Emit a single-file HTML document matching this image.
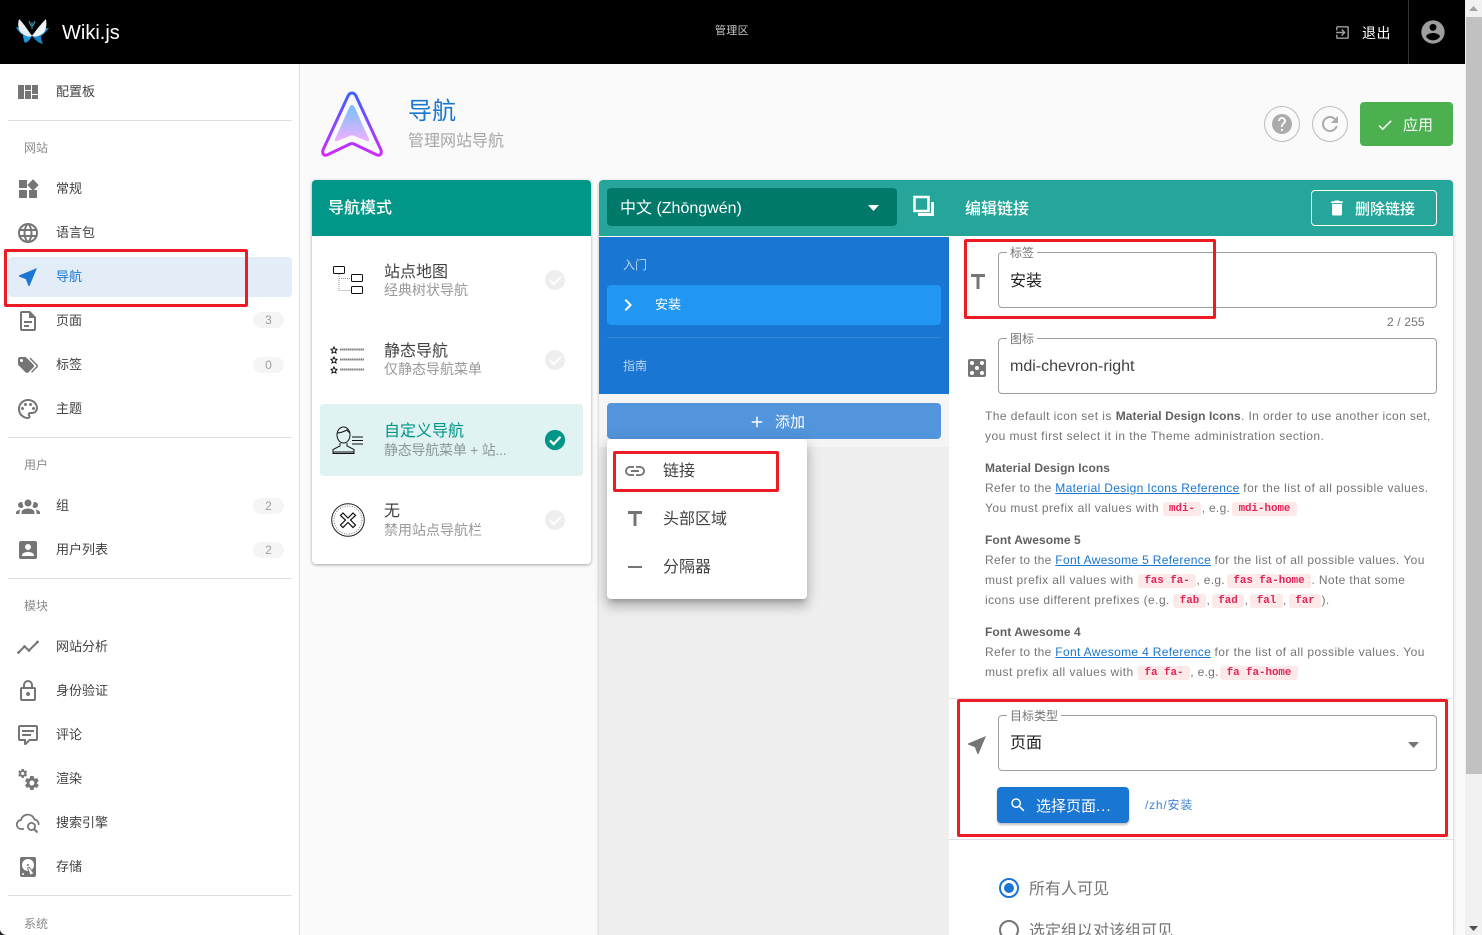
<!DOCTYPE html>
<html lang="zh"><head><meta charset="utf-8"><title>Wiki.js</title>
<style>
html,body{margin:0;padding:0;width:1482px;height:935px;overflow:hidden;background:#fafafa}
body{position:relative;font-family:"Liberation Sans","Noto Sans CJK SC",sans-serif;color:#333}
div,svg{position:absolute}
.t{position:absolute;white-space:pre;line-height:20px;height:20px}
.n{left:56px;font-size:13px;color:#424242}
.s{left:24px;font-size:12px;color:#8a8a8a}
.d{left:8px;width:284px;height:1px;background:#e0e0e0}
.i{left:16px;width:24px;height:24px;fill:#757575}
.b{left:253px;width:31px;height:16px;border-radius:8px;background:#f5f5f5;color:#9e9e9e;font-size:12px;line-height:16px;text-align:center}
.m1{left:384px;font-size:16px;color:#424242}
.m2{left:384px;font-size:13px;color:#8f8f8f}
.c{left:544px;width:22px;height:22px;fill:#eee}
.h{font-size:12px;color:#757575;letter-spacing:.44px;left:985px}
.h b{color:#616161;letter-spacing:.08px}
.h a{color:#1976d2;text-decoration:underline;letter-spacing:.33px}
.k{position:absolute;font-family:"Liberation Mono",monospace;font-weight:bold;font-size:10.8px;line-height:14px;height:14px;color:#e0245e;background:#fde9e7;border-radius:3px;text-align:center;white-space:pre}
.f{left:998px;width:437px;height:54px;border:1px solid #9e9e9e;border-radius:4px;background:#fff}
.l{left:1007px;padding:0 3px;background:#fff;font-size:12px;line-height:14px;height:14px;color:#757575;white-space:nowrap}
.red{border:3px solid #ed1c24;border-radius:2px;box-sizing:border-box}
.mi{left:623px;width:24px;height:24px;fill:#757575}
.mt{left:663px;font-size:16px;color:#424242}
.ti{fill:#757575;width:24px;height:24px}
</style></head><body>

<!-- top bar -->
<div style="left:0;top:0;width:1465px;height:64px;background:#000"></div>
<svg style="left:14px;top:16px" width="38" height="32" viewBox="0 0 38 32">
<path d="M18 19C12 15 7 12 2 11C4 15 7 18 9 19C9 22 10 25 11 27C14 26 17 23 18 19Z" fill="#1f9ade"/>
<path d="M18 19C24 15 29 12 35 12C33 15 30 18 27 20C27 23 28 26 29 28C24 27 20 23 18 19Z" fill="#1a84c8"/>
<path d="M18 20C13 13 10 8 5 3C3 10 5 16 9 18C13 21 16 21 18 20Z" fill="#e8edf2"/>
<path d="M18 20C23 13 27 8 32 3C33 10 32 16 28 18C24 21 20 21 18 20Z" fill="#f1f4f7"/>
<path d="M15 5L17 10M21 5L19 10M18 6V13" stroke="#3f8aa6" stroke-width="1.2" fill="none"/>
</svg>
<div class="t" style="left:62px;top:22px;font-size:20px;line-height:22px;color:#fff">Wiki.js</div>
<div class="t" style="left:715px;top:21px;font-size:11px;color:#c8c8c8;letter-spacing:.3px">管理区</div>
<svg style="left:1334px;top:24px;fill:#9e9e9e" width="17" height="17" viewBox="0 0 24 24"><path d="M10.09,15.59L11.5,17L16.5,12L11.5,7L10.09,8.41L12.67,11H3V13H12.67L10.09,15.59M19,3H5C3.89,3 3,3.9 3,5V9H5V5H19V19H5V15H3V19A2,2 0 0,0 5,21H19A2,2 0 0,0 21,19V5C21,3.9 20.1,3 19,3Z"/></svg>
<div class="t" style="left:1362px;top:23px;font-size:14px;color:#fff;letter-spacing:.5px">退出</div>
<div style="left:1408px;top:0;width:1px;height:64px;background:#333"></div>
<svg style="left:1419px;top:18px;fill:#9e9e9e" width="28" height="28" viewBox="0 0 24 24"><path d="M12,19.2C9.5,19.2 7.29,17.92 6,16C6.03,14 10,12.9 12,12.9C14,12.9 17.97,14 18,16C16.71,17.92 14.5,19.2 12,19.2M12,5A3,3 0 0,1 15,8A3,3 0 0,1 12,11A3,3 0 0,1 9,8A3,3 0 0,1 12,5M12,2A10,10 0 0,0 2,12A10,10 0 0,0 12,22A10,10 0 0,0 22,12C22,6.47 17.5,2 12,2Z"/></svg>

<!-- sidebar -->
<div style="left:0;top:64px;width:299px;height:871px;background:#fff;border-right:1px solid #e0e0e0"></div>
<div style="left:8px;top:257px;width:284px;height:40px;background:#e3edf8;border-radius:4px"></div>

<svg class="i" style="top:80px" viewBox="0 0 24 24"><path d="M2,5V19H8V5H2M9,5V10H15V5H9M16,5V14H22V5H16M9,11V19H15V11H9M16,15V19H22V15H16Z"/></svg>
<div class="t n" style="top:82px">配置板</div>
<div class="d" style="top:120px"></div>
<div class="t s" style="top:138px">网站</div>
<svg class="i" style="top:177px" viewBox="0 0 24 24"><path d="M3 3H11V11H3V3M3 13H11V21H3V13M13 13H21V21H13V13M17 2.3L22.7 8L17 13.7L11.3 8L17 2.3Z"/></svg>
<div class="t n" style="top:179px">常规</div>
<svg class="i" style="top:221px" viewBox="0 0 24 24"><path d="M16.36,14C16.44,13.34 16.5,12.68 16.5,12C16.5,11.32 16.44,10.66 16.36,10H19.74C19.9,10.64 20,11.31 20,12C20,12.69 19.9,13.36 19.74,14M14.59,19.56C15.19,18.45 15.65,17.25 15.97,16H18.92C17.96,17.65 16.43,18.93 14.59,19.56M14.34,14H9.66C9.56,13.34 9.5,12.68 9.5,12C9.5,11.32 9.56,10.65 9.66,10H14.34C14.43,10.65 14.5,11.32 14.5,12C14.5,12.68 14.43,13.34 14.34,14M12,19.96C11.17,18.76 10.5,17.43 10.09,16H13.91C13.5,17.43 12.83,18.76 12,19.96M8,8H5.08C6.03,6.34 7.57,5.06 9.4,4.44C8.8,5.55 8.35,6.75 8,8M5.08,16H8C8.35,17.25 8.8,18.45 9.4,19.56C7.57,18.93 6.03,17.65 5.08,16M4.26,14C4.1,13.36 4,12.69 4,12C4,11.31 4.1,10.64 4.26,10H7.64C7.56,10.66 7.5,11.32 7.5,12C7.5,12.68 7.56,13.34 7.64,14M12,4.03C12.83,5.23 13.5,6.57 13.91,8H10.09C10.5,6.57 11.17,5.23 12,4.03M18.92,8H15.97C15.65,6.75 15.19,5.55 14.59,4.44C16.43,5.07 17.96,6.34 18.92,8M12,2C6.47,2 2,6.5 2,12A10,10 0 0,0 12,22A10,10 0 0,0 22,12A10,10 0 0,0 12,2Z"/></svg>
<div class="t n" style="top:223px">语言包</div>
<svg class="i" style="top:265px;fill:#1976d2" viewBox="0 0 24 24"><path d="M21,3L3,10.53V11.5L9.84,14.16L12.5,21H13.46L21,3Z"/></svg>
<div class="t n" style="top:267px;color:#1976d2">导航</div>
<svg class="i" style="top:309px" viewBox="0 0 24 24"><path d="M6,2A2,2 0 0,0 4,4V20A2,2 0 0,0 6,22H18A2,2 0 0,0 20,20V8L14,2H6M6,4H13V9H18V20H6V4M8,12V14H16V12H8M8,16V18H13V16H8Z"/></svg>
<div class="t n" style="top:311px">页面</div>
<div class="b" style="top:312px">3</div>
<svg class="i" style="top:353px" viewBox="0 0 24 24"><path d="M5.5,9A1.5,1.5 0 0,0 7,7.5A1.5,1.5 0 0,0 5.5,6A1.5,1.5 0 0,0 4,7.5A1.5,1.5 0 0,0 5.5,9M17.41,11.58C17.77,11.94 18,12.44 18,13C18,13.55 17.78,14.05 17.41,14.41L12.41,19.41C12.05,19.77 11.55,20 11,20C10.45,20 9.95,19.78 9.58,19.41L2.59,12.42C2.22,12.05 2,11.55 2,11V6C2,4.89 2.89,4 4,4H9C9.55,4 10.05,4.22 10.41,4.58L17.41,11.58M13.54,5.71L14.54,4.71L21.41,11.58C21.78,11.94 22,12.45 22,13C22,13.55 21.78,14.05 21.42,14.41L16.04,19.79L15.04,18.79L20.75,13L13.54,5.71Z"/></svg>
<div class="t n" style="top:355px">标签</div>
<div class="b" style="top:357px">0</div>
<svg class="i" style="top:397px" viewBox="0 0 24 24"><path d="M12 22C6.49 22 2 17.51 2 12S6.49 2 12 2s10 4.04 10 9c0 3.31-2.69 6-6 6h-1.77c-.28 0-.5.22-.5.5 0 .12.05.23.13.33.41.47.64 1.06.64 1.67A2.5 2.5 0 0 1 12 22zm0-18c-4.41 0-8 3.59-8 8s3.59 8 8 8c.28 0 .5-.22.5-.5a.54.54 0 0 0-.14-.35c-.41-.46-.63-1.05-.63-1.65a2.5 2.5 0 0 1 2.5-2.5H16c2.21 0 4-1.79 4-4 0-3.86-3.59-7-8-7z"/><circle cx="6.5" cy="11.5" r="1.5"/><circle cx="9.5" cy="7.5" r="1.5"/><circle cx="14.5" cy="7.5" r="1.5"/><circle cx="17.5" cy="11.5" r="1.5"/></svg>
<div class="t n" style="top:399px">主题</div>
<div class="d" style="top:437px"></div>
<div class="t s" style="top:455px">用户</div>
<svg class="i" style="top:494px" viewBox="0 0 24 24"><path d="M12,5.5A3.5,3.5 0 0,1 15.5,9A3.5,3.5 0 0,1 12,12.5A3.5,3.5 0 0,1 8.5,9A3.5,3.5 0 0,1 12,5.5M5,8C5.56,8 6.08,8.15 6.53,8.42C6.38,9.85 6.8,11.27 7.66,12.38C7.16,13.34 6.16,14 5,14A3,3 0 0,1 2,11A3,3 0 0,1 5,8M19,8A3,3 0 0,1 22,11A3,3 0 0,1 19,14C17.84,14 16.84,13.34 16.34,12.38C17.2,11.27 17.62,9.85 17.47,8.42C17.92,8.15 18.44,8 19,8M5.5,18.25C5.5,16.18 8.41,14.5 12,14.5C15.59,14.5 18.5,16.18 18.5,18.25V20H5.5V18.25M0,20V18.5C0,17.11 1.89,15.94 4.45,15.6C3.86,16.28 3.5,17.22 3.5,18.25V20H0M24,20H20.5V18.25C20.5,17.22 20.14,16.28 19.55,15.6C22.11,15.94 24,17.11 24,18.5V20Z"/></svg>
<div class="t n" style="top:496px">组</div>
<div class="b" style="top:498px">2</div>
<svg class="i" style="top:538px" viewBox="0 0 24 24"><path d="M6,17C6,15 10,13.9 12,13.9C14,13.9 18,15 18,17V18H6M15,9A3,3 0 0,1 12,12A3,3 0 0,1 9,9A3,3 0 0,1 12,6A3,3 0 0,1 15,9M3,5V19A2,2 0 0,0 5,21H19A2,2 0 0,0 21,19V5A2,2 0 0,0 19,3H5C3.89,3 3,3.9 3,5Z"/></svg>
<div class="t n" style="top:540px">用户列表</div>
<div class="b" style="top:542px">2</div>
<div class="d" style="top:578px"></div>
<div class="t s" style="top:596px">模块</div>
<svg class="i" style="top:635px" viewBox="0 0 24 24"><path d="M2.5 17.5L8.5 11.5L13 15.5L21.5 7" fill="none" stroke="#757575" stroke-width="2"/><circle cx="2.5" cy="17.5" r="1.4"/><circle cx="8.5" cy="11.5" r="1.4"/><circle cx="13" cy="15.5" r="1.4"/><circle cx="21.5" cy="7" r="1.4"/></svg>
<div class="t n" style="top:637px">网站分析</div>
<svg class="i" style="top:679px" viewBox="0 0 24 24"><path d="M12,17C10.89,17 10,16.1 10,15C10,13.89 10.89,13 12,13A2,2 0 0,1 14,15A2,2 0 0,1 12,17M18,20V10H6V20H18M18,8A2,2 0 0,1 20,10V20A2,2 0 0,1 18,22H6C4.89,22 4,21.1 4,20V10C4,8.89 4.89,8 6,8H7V6A5,5 0 0,1 12,1A5,5 0 0,1 17,6V8H18M12,3A3,3 0 0,0 9,6V8H15V6A3,3 0 0,0 12,3Z"/></svg>
<div class="t n" style="top:681px">身份验证</div>
<svg class="i" style="top:723px" viewBox="0 0 24 24"><path d="M9,22A1,1 0 0,1 8,21V18H4A2,2 0 0,1 2,16V4C2,2.89 2.9,2 4,2H20A2,2 0 0,1 22,4V16A2,2 0 0,1 20,18H13.9L10.2,21.71C10,21.9 9.75,22 9.5,22V22H9M10,16V19.08L13.08,16H20V4H4V16H10M6,7H18V9H6V7M6,11H15V13H6V11Z"/></svg>
<div class="t n" style="top:725px">评论</div>
<svg class="i" style="top:767px" viewBox="0 0 24 24"><path d="M15.9,18.45C17.25,18.45 18.35,17.35 18.35,16C18.35,14.65 17.25,13.55 15.9,13.55C14.54,13.55 13.45,14.65 13.45,16C13.45,17.35 14.54,18.45 15.9,18.45M21.1,16.68L22.58,17.84C22.71,17.95 22.75,18.13 22.66,18.29L21.26,20.71C21.17,20.86 21,20.92 20.83,20.86L19.09,20.16C18.73,20.44 18.33,20.67 17.91,20.85L17.64,22.7C17.62,22.87 17.47,23 17.3,23H14.5C14.32,23 14.18,22.87 14.15,22.7L13.89,20.85C13.46,20.67 13.07,20.44 12.71,20.16L10.96,20.86C10.81,20.92 10.62,20.86 10.54,20.71L9.14,18.29C9.05,18.13 9.09,17.95 9.22,17.84L10.7,16.68L10.65,16L10.7,15.31L9.22,14.16C9.09,14.05 9.05,13.86 9.14,13.71L10.54,11.29C10.62,11.13 10.81,11.07 10.96,11.13L12.71,11.84C13.07,11.56 13.46,11.32 13.89,11.15L14.15,9.29C14.18,9.13 14.32,9 14.5,9H17.3C17.47,9 17.62,9.13 17.64,9.29L17.91,11.15C18.33,11.32 18.73,11.56 19.09,11.84L20.83,11.13C21,11.07 21.17,11.13 21.26,11.29L22.66,13.71C22.75,13.86 22.71,14.05 22.58,14.16L21.1,15.31L21.15,16L21.1,16.68M6.69,8.07C7.56,8.07 8.26,7.37 8.26,6.5C8.26,5.63 7.56,4.92 6.69,4.92A1.58,1.58 0 0,0 5.11,6.5C5.11,7.37 5.82,8.07 6.69,8.07M10.03,6.94L11,7.68C11.07,7.75 11.09,7.87 11.03,7.97L10.13,9.53C10.08,9.63 9.96,9.67 9.86,9.63L8.74,9.18L8,9.62L7.81,10.81C7.79,10.92 7.7,11 7.59,11H5.79C5.67,11 5.58,10.92 5.56,10.81L5.4,9.62L4.64,9.18L3.5,9.63C3.41,9.67 3.3,9.63 3.24,9.53L2.34,7.97C2.28,7.87 2.31,7.75 2.39,7.68L3.34,6.94L3.31,6.5L3.34,6.06L2.39,5.32C2.31,5.25 2.28,5.13 2.34,5.03L3.24,3.47C3.3,3.37 3.41,3.33 3.5,3.37L4.63,3.82L5.4,3.38L5.56,2.19C5.58,2.08 5.67,2 5.79,2H7.59C7.7,2 7.79,2.08 7.81,2.19L8,3.38L8.74,3.82L9.86,3.37C9.96,3.33 10.08,3.37 10.13,3.47L11.03,5.03C11.09,5.13 11.07,5.25 11,5.32L10.03,6.06L10.06,6.5L10.03,6.94Z"/></svg>
<div class="t n" style="top:769px">渲染</div>
<svg class="i" style="top:811px" viewBox="0 0 24 24"><path d="M8 18H5.5A4.5 4.5 0 0 1 5 9A7 7 0 0 1 18.5 8.5A4.6 4.6 0 0 1 22.5 14" fill="none" stroke="#757575" stroke-width="1.7"/><circle cx="15.5" cy="15.5" r="3.6" fill="none" stroke="#757575" stroke-width="1.8"/><path d="M18 18L21.5 21.5" stroke="#757575" stroke-width="2"/></svg>
<div class="t n" style="top:813px">搜索引擎</div>
<svg class="i" style="top:855px" viewBox="0 0 24 24"><path d="M6,2H18A2,2 0 0,1 20,4V20A2,2 0 0,1 18,22H6A2,2 0 0,1 4,20V4A2,2 0 0,1 6,2M12,4A6,6 0 0,0 6,10C6,13.31 8.69,16 12.1,16L11.22,13.77C10.95,13.29 11.11,12.68 11.59,12.4L12.45,11.9C12.93,11.63 13.54,11.79 13.82,12.27L15.74,14.69C17.12,13.59 18,11.9 18,10A6,6 0 0,0 12,4M12,9A1,1 0 0,1 13,10A1,1 0 0,1 12,11A1,1 0 0,1 11,10A1,1 0 0,1 12,9M7,18A1,1 0 0,0 6,19A1,1 0 0,0 7,20A1,1 0 0,0 8,19A1,1 0 0,0 7,18M12.09,13.27L14.58,19.58L17.17,18.08L12.95,12.77L12.09,13.27Z"/></svg>
<div class="t n" style="top:857px">存储</div>
<div class="d" style="top:895px"></div>
<div class="t s" style="top:914px">系统</div>

<!-- page head -->
<svg style="left:318px;top:88px" width="68" height="72" viewBox="0 0 68 72">
<defs><linearGradient id="g1" x1="0" y1="0" x2="0" y2="1"><stop offset="0" stop-color="#3a62ff"/><stop offset="1" stop-color="#cf2bff"/></linearGradient>
<linearGradient id="g2" x1="0" y1="0" x2="0" y2="1"><stop offset="0" stop-color="#75c2ff"/><stop offset="1" stop-color="#efb0ff"/></linearGradient></defs>
<path d="M34 5C32 5 31 6 30 8L5 62C4 66 6 68 9 67L32 56C33 55.500 35 55.500 36 56L59 67C62 68 64 66 63 62L38 8C37 6 36 5 34 5Z" fill="none" stroke="url(#g1)" stroke-width="3"/>
<path d="M34 17C33 17 32 18 31.500 19L17 51C16.500 53 17.500 53.500 19 53L33 47.500C33.500 47.300 34.500 47.300 35 47.500L49 53C50.500 53.500 51.500 53 51 51L36.500 19C36 18 35 17 34 17Z" fill="url(#g2)"/>
</svg>
<div class="t" style="left:408px;top:97px;font-size:24px;line-height:30px;height:30px;color:#1976d2">导航</div>
<div class="t" style="left:408px;top:132px;font-size:16px;color:#a6a6a6">管理网站导航</div>
<div style="left:1264px;top:106px;width:34px;height:34px;border:1px solid #bdbdbd;border-radius:50%"></div>
<svg style="left:1270px;top:112px;fill:#ababab" width="24" height="24" viewBox="0 0 24 24"><path d="M15.07,11.25L14.17,12.17C13.45,12.89 13,13.5 13,15H11V14.5C11,13.39 11.45,12.39 12.17,11.67L13.41,10.41C13.78,10.05 14,9.55 14,9C14,7.89 13.1,7 12,7A2,2 0 0,0 10,9H8A4,4 0 0,1 12,5A4,4 0 0,1 16,9C16,9.88 15.64,10.67 15.07,11.25M13,19H11V17H13M12,2A10,10 0 0,0 2,12A10,10 0 0,0 12,22A10,10 0 0,0 22,12C22,6.47 17.5,2 12,2Z"/></svg>
<div style="left:1312px;top:106px;width:34px;height:34px;border:1px solid #bdbdbd;border-radius:50%"></div>
<svg style="left:1318px;top:112px;fill:#ababab" width="24" height="24" viewBox="0 0 24 24"><path d="M17.65,6.35C16.2,4.9 14.21,4 12,4A8,8 0 0,0 4,12A8,8 0 0,0 12,20C15.73,20 18.84,17.45 19.73,14H17.65C16.83,16.33 14.61,18 12,18A6,6 0 0,1 6,12A6,6 0 0,1 12,6C13.66,6 15.14,6.69 16.22,7.78L13,11H20V4L17.65,6.35Z"/></svg>
<div style="left:1360px;top:102px;width:93px;height:44px;background:#4caf50;border-radius:4px"></div>
<svg style="left:1376px;top:116px;fill:#fff" width="18" height="18" viewBox="0 0 24 24"><path d="M21,7L9,19L3.5,13.5L4.91,12.09L9,16.17L19.59,5.59L21,7Z"/></svg>
<div class="t" style="left:1403px;top:116px;font-size:15px;color:#fff">应用</div>

<!-- mode card -->
<div style="left:312px;top:180px;width:279px;height:384px;background:#fff;border-radius:4px;box-shadow:0 1px 3px rgba(0,0,0,.35)"></div>
<div style="left:312px;top:180px;width:279px;height:56px;background:#009688;border-radius:4px 4px 0 0"></div>
<div class="t" style="left:328px;top:199px;font-size:16px;font-weight:500;color:#fff">导航模式</div>

<svg style="left:330px;top:262px" width="36" height="36" viewBox="0 0 36 36" fill="none">
<rect x="3.500" y="4.500" width="11" height="7" rx="1" stroke="#111"/><rect x="21.500" y="12.500" width="11" height="7" rx="1" stroke="#111"/><rect x="21.500" y="24.500" width="11" height="7" rx="1" stroke="#111"/>
<path d="M9 12V28.500H21M9 16.500H21" stroke="#999" stroke-dasharray="1 1"/></svg>
<div class="t m1" style="top:263px">站点地图</div>
<div class="t m2" style="top:280px;font-size:14px;color:#999">经典树状导航</div>
<svg class="c" style="top:269px" viewBox="0 0 24 24"><circle cx="12" cy="12" r="11"/><path d="M6.500 12.500L10.500 16.500L18 8.500" fill="none" stroke="#fff" stroke-width="2"/></svg>

<svg style="left:330px;top:342px" width="36" height="36" viewBox="0 0 36 36">
<g fill="none" stroke="#111"><path d="M4 5L5 7L7 7.300L5.500 9L6 11L4 10L2 11L2.500 9L1 7.300L3 7Z"/><path d="M4 15L5 17L7 17.300L5.500 19L6 21L4 20L2 21L2.500 19L1 17.300L3 17Z"/><path d="M4 25L5 27L7 27.300L5.500 29L6 31L4 30L2 31L2.500 29L1 27.300L3 27Z"/></g>
<path d="M10 7.500H34M10 17.500H34M10 27.500H34" stroke="#808080" stroke-width="2" stroke-dasharray="1.500 .4"/></svg>
<div class="t m1" style="top:342px">静态导航</div>
<div class="t m2" style="top:359px;font-size:14px;color:#999">仅静态导航菜单</div>
<svg class="c" style="top:349px" viewBox="0 0 24 24"><circle cx="12" cy="12" r="11"/><path d="M6.500 12.500L10.500 16.500L18 8.500" fill="none" stroke="#fff" stroke-width="2"/></svg>

<div style="left:320px;top:404px;width:263px;height:72px;background:#e0f2f1;border-radius:4px"></div>
<svg style="left:330px;top:424px" width="36" height="32" viewBox="0 0 36 32" fill="none" stroke="#111">
<ellipse cx="13.500" cy="11" rx="6.500" ry="8"/><path d="M7 9C11 9 15 7 17 6C18 8 19 8 20 9"/>
<path d="M10 19V22L3 25.500V29.500H24V25.500L17 22V19M3 28H24"/><path d="M22 13H33M22 16.500H33M22 20H33"/></svg>
<div class="t m1" style="top:422px;color:#009688">自定义导航</div>
<div class="t m2" style="top:440px;font-size:14px;color:#8a9998;letter-spacing:-.25px">静态导航菜单 + 站...</div>
<svg style="left:544px;top:429px;fill:#009688" width="22" height="22" viewBox="0 0 24 24"><circle cx="12" cy="12" r="11"/><path d="M6.500 12.500L10.500 16.500L18 8.500" fill="none" stroke="#fff" stroke-width="2.400"/></svg>

<svg style="left:330px;top:502px" width="36" height="36" viewBox="0 0 36 36" fill="none">
<circle cx="18" cy="18" r="16.300" stroke="#222" stroke-width="1"/><circle cx="18" cy="18" r="14" stroke="#777" stroke-dasharray="1 1.500"/>
<path d="M13 11L18 16L23 11L25.500 13.500L20.500 18L25.500 23L23 25.500L18 20.500L13 25.500L10.500 23L15.500 18L10.500 13.500Z" stroke="#111" stroke-width="1.200"/></svg>
<div class="t m1" style="top:502px">无</div>
<div class="t m2" style="top:520px;font-size:14px;color:#999">禁用站点导航栏</div>
<svg class="c" style="top:509px" viewBox="0 0 24 24"><circle cx="12" cy="12" r="11"/><path d="M6.500 12.500L10.500 16.500L18 8.500" fill="none" stroke="#fff" stroke-width="2"/></svg>

<!-- main card -->
<div style="left:599px;top:180px;width:854px;height:755px;background:#fff;box-shadow:0 1px 3px rgba(0,0,0,.25);border-radius:4px 4px 0 0"></div>
<div style="left:599px;top:180px;width:854px;height:56px;background:#26a69a;border-radius:4px 4px 0 0"></div>
<div style="left:607px;top:188px;width:290px;height:38px;background:#00796b;border-radius:4px"></div>
<div class="t" style="left:620px;top:199px;font-size:16px;color:#fff">中文 (Zhōngwén)</div>
<svg style="left:868px;top:205px" width="11" height="6" viewBox="0 0 11 6"><path d="M0 0H11L5.500 6Z" fill="#fff"/></svg>
<svg style="left:912px;top:195px" width="23" height="22" viewBox="0 0 23 22"><rect x="2.500" y="2" width="14" height="14" fill="none" stroke="#fff" stroke-width="2.500"/><path d="M19 7H22V21H6V18H19Z" fill="#fff"/></svg>
<div class="t" style="left:965px;top:200px;font-size:16px;font-weight:500;color:#fff">编辑链接</div>
<div style="left:1311px;top:190px;width:124px;height:34px;border:1px solid #fff;border-radius:4px"></div>
<svg style="left:1327px;top:198px;fill:#fff" width="20" height="20" viewBox="0 0 24 24"><path d="M19,4H15.500L14.500,3H9.500L8.500,4H5V6H19M6,19A2,2 0 0,0 8,21H16A2,2 0 0,0 18,19V7H6V19Z"/></svg>
<div class="t" style="left:1355px;top:200px;font-size:15px;font-weight:500;color:#fff">删除链接</div>

<!-- nav column -->
<div style="left:599px;top:237px;width:350px;height:698px;background:#eee"></div>
<div style="left:599px;top:394px;width:350px;height:53px;background:#f5f5f5"></div>
<div style="left:599px;top:237px;width:350px;height:157px;background:#1976d2"></div>
<div class="t" style="left:623px;top:255px;font-size:12px;color:#b9d5f1">入门</div>
<div style="left:607px;top:285px;width:334px;height:40px;background:#2196f3;border-radius:4px"></div>
<svg style="left:616px;top:293px;fill:#fff" width="24" height="24" viewBox="0 0 24 24"><path d="M8.590,16.580L13.170,12L8.590,7.410L10,6L16,12L10,18L8.590,16.580Z"/></svg>
<div class="t" style="left:655px;top:295px;font-size:13px;color:#fff">安装</div>
<div style="left:607px;top:337px;width:334px;height:1px;background:rgba(255,255,255,.12)"></div>
<div class="t" style="left:623px;top:356px;font-size:12px;color:#b9d5f1">指南</div>
<div style="left:607px;top:403px;width:334px;height:36px;background:#5295dc;border-radius:4px"></div>
<svg style="left:748px;top:413px;fill:#fff" width="18" height="18" viewBox="0 0 24 24"><path d="M19,13H13V19H11V13H5V11H11V5H13V11H19V13Z"/></svg>
<div class="t" style="left:775px;top:413px;font-size:15px;color:#fff">添加</div>

<div style="left:607px;top:439px;width:200px;height:160px;background:#fff;border-radius:4px;box-shadow:0 5px 5px -3px rgba(0,0,0,.2),0 8px 10px 1px rgba(0,0,0,.14),0 3px 14px 2px rgba(0,0,0,.12)"></div>
<svg class="mi" style="top:459px" viewBox="0 0 24 24"><path d="M3.900,12C3.900,10.290 5.290,8.900 7,8.900H11V7H7A5,5 0 0,0 2,12A5,5 0 0,0 7,17H11V15.100H7C5.290,15.100 3.900,13.710 3.900,12M8,13H16V11H8V13M17,7H13V8.900H17C18.710,8.900 20.100,10.290 20.100,12C20.100,13.710 18.710,15.100 17,15.100H13V17H17A5,5 0 0,0 22,12A5,5 0 0,0 17,7Z"/></svg>
<div class="t mt" style="top:462px">链接</div>
<svg class="mi" style="top:507px" viewBox="0 0 24 24"><path d="M5,4V7H10.500V19H13.500V7H19V4H5Z"/></svg>
<div class="t mt" style="top:510px">头部区域</div>
<svg class="mi" style="top:555px" viewBox="0 0 24 24"><path d="M19,13H5V11H19V13Z"/></svg>
<div class="t mt" style="top:558px">分隔器</div>

<!-- form -->
<div style="left:949px;top:236px;width:504px;height:699px;background:#fff"></div>
<svg class="ti" style="position:absolute;left:966px;top:270px" viewBox="0 0 24 24"><path d="M5,4V7H10.500V19H13.500V7H19V4H5Z"/></svg>
<div class="f" style="top:252px"></div>
<div class="l" style="top:246px">标签</div>
<div class="t" style="left:1010px;top:272px;font-size:16px;color:#222">安装</div>
<div class="t" style="left:1387px;top:312px;font-size:12px;color:#757575;letter-spacing:.15px">2 / 255</div>
<svg class="ti" style="position:absolute;left:965px;top:356px" viewBox="0 0 24 24"><path d="M5,3H19A2,2 0 0,1 21,5V19A2,2 0 0,1 19,21H5A2,2 0 0,1 3,19V5A2,2 0 0,1 5,3M7,5A2,2 0 0,0 5,7A2,2 0 0,0 7,9A2,2 0 0,0 9,7A2,2 0 0,0 7,5M17,15A2,2 0 0,0 15,17A2,2 0 0,0 17,19A2,2 0 0,0 19,17A2,2 0 0,0 17,15M17,5A2,2 0 0,0 15,7A2,2 0 0,0 17,9A2,2 0 0,0 19,7A2,2 0 0,0 17,5M12,10A2,2 0 0,0 10,12A2,2 0 0,0 12,14A2,2 0 0,0 14,12A2,2 0 0,0 12,10M7,15A2,2 0 0,0 5,17A2,2 0 0,0 7,19A2,2 0 0,0 9,17A2,2 0 0,0 7,15Z"/></svg>
<div class="f" style="top:338px"></div>
<div class="l" style="top:332px">图标</div>
<div class="t" style="left:1010px;top:357px;font-size:16px;color:#424242">mdi-chevron-right</div>

<div class="t h" style="top:406px">The default icon set is</div>
<div class="t h" style="top:406px;left:1115.700px"><b>Material Design Icons</b></div>
<div class="t h" style="top:406px;left:1241px;letter-spacing:.39px">. In order to use another icon set,</div>
<div class="t h" style="top:426px;letter-spacing:.46px">you must first select it in the Theme administration section.</div>

<div class="t h" style="top:458px"><b>Material Design Icons</b></div>
<div class="t h" style="top:478px;letter-spacing:.33px">Refer to the</div>
<div class="t h" style="top:478px;left:1055.300px"><a>Material Design Icons Reference</a></div>
<div class="t h" style="top:478px;left:1243.300px">for the list of all possible values.</div>
<div class="t h" style="top:498px">You must prefix all values with</div>
<div class="k" style="top:502px;left:1163px;width:38px">mdi-</div>
<div class="t h" style="top:498px;left:1201.700px;letter-spacing:.3px">, e.g.</div>
<div class="k" style="top:502px;left:1232px;width:65px">mdi-home</div>

<div class="t h" style="top:530px"><b>Font Awesome 5</b></div>
<div class="t h" style="top:550px;letter-spacing:.33px">Refer to the</div>
<div class="t h" style="top:550px;left:1055.300px"><a>Font Awesome 5 Reference</a></div>
<div class="t h" style="top:550px;left:1214.500px">for the list of all possible values. You</div>
<div class="t h" style="top:570px">must prefix all values with</div>
<div class="k" style="top:574px;left:1138px;width:58px">fas fa-</div>
<div class="t h" style="top:570px;left:1196.500px;letter-spacing:.3px">, e.g.</div>
<div class="k" style="top:574px;left:1227px;width:84px">fas fa-home</div>
<div class="t h" style="top:570px;left:1311.500px;letter-spacing:.36px">. Note that some</div>
<div class="t h" style="top:590px">icons use different prefixes (e.g.</div>
<div class="k" style="top:594px;left:1173px;width:33px">fab</div>
<div class="t h" style="top:590px;left:1206.500px">,</div>
<div class="k" style="top:594px;left:1212px;width:32px">fad</div>
<div class="t h" style="top:590px;left:1244.500px">,</div>
<div class="k" style="top:594px;left:1250px;width:33px">fal</div>
<div class="t h" style="top:590px;left:1283px">,</div>
<div class="k" style="top:594px;left:1289px;width:32px">far</div>
<div class="t h" style="top:590px;left:1321.500px">).</div>

<div class="t h" style="top:622px"><b>Font Awesome 4</b></div>
<div class="t h" style="top:642px;letter-spacing:.33px">Refer to the</div>
<div class="t h" style="top:642px;left:1055.300px"><a>Font Awesome 4 Reference</a></div>
<div class="t h" style="top:642px;left:1214.500px">for the list of all possible values. You</div>
<div class="t h" style="top:662px">must prefix all values with</div>
<div class="k" style="top:666px;left:1138px;width:52px">fa fa-</div>
<div class="t h" style="top:662px;left:1190.300px;letter-spacing:.3px">, e.g.</div>
<div class="k" style="top:666px;left:1220px;width:78px">fa fa-home</div>

<div style="left:949px;top:698px;width:504px;height:1px;background:#e0e0e0"></div>
<div style="left:949px;top:839px;width:504px;height:1px;background:#e0e0e0"></div>
<svg class="ti" style="position:absolute;left:965px;top:733px" viewBox="0 0 24 24"><path d="M21,3L3,10.530V11.500L9.840,14.160L12.500,21H13.460L21,3Z"/></svg>
<div class="f" style="top:715px"></div>
<div class="l" style="top:709px">目标类型</div>
<div class="t" style="left:1010px;top:734px;font-size:16px;color:#222">页面</div>
<svg style="left:1408px;top:742px" width="11" height="6" viewBox="0 0 11 6"><path d="M0 0H11L5.500 6Z" fill="#757575"/></svg>
<div style="left:997px;top:787px;width:132px;height:36px;background:#1976d2;border-radius:4px;box-shadow:0 2px 2px rgba(0,0,0,.25)"></div>
<svg style="left:1009px;top:796px;fill:#fff" width="18" height="18" viewBox="0 0 24 24"><path d="M9.500,3A6.500,6.500 0 0,1 16,9.500C16,11.110 15.410,12.590 14.440,13.730L14.710,14H15.500L20.500,19L19,20.500L14,15.500V14.710L13.730,14.440C12.590,15.410 11.110,16 9.500,16A6.500,6.500 0 0,1 3,9.500A6.500,6.500 0 0,1 9.500,3M9.500,5C7,5 5,7 5,9.500C5,12 7,14 9.500,14C12,14 14,12 14,9.500C14,7 12,5 9.500,5Z"/></svg>
<div class="t" style="left:1036px;top:797px;font-size:15px;color:#fff;letter-spacing:0">选择页面<span style="letter-spacing:1px">...</span></div>
<div class="t" style="left:1145px;top:795px;font-size:12px;color:#3f83d6;letter-spacing:.8px">/zh/安装</div>

<svg style="left:997px;top:876px" width="24" height="24" viewBox="0 0 24 24"><circle cx="12" cy="12" r="9" fill="none" stroke="#1976d2" stroke-width="2"/><circle cx="12" cy="12" r="5" fill="#1976d2"/></svg>
<div class="t" style="left:1029px;top:880px;font-size:16px;color:#757575">所有人可见</div>
<svg style="left:997px;top:918px" width="24" height="24" viewBox="0 0 24 24"><circle cx="12" cy="12" r="9" fill="none" stroke="#757575" stroke-width="2"/></svg>
<div class="t" style="left:1029px;top:922px;font-size:16px;color:#757575">选定组以对该组可见</div>

<!-- red annotations -->
<div class="red" style="left:4px;top:249px;width:244px;height:58px"></div>
<div class="red" style="left:964px;top:239px;width:252px;height:80px"></div>
<div class="red" style="left:613px;top:451px;width:166px;height:41px"></div>
<div class="red" style="left:957px;top:699px;width:491px;height:138px"></div>

<!-- scrollbar -->
<div style="left:1465px;top:0;width:17px;height:935px;background:#f1f1f1"></div>
<div style="left:1466px;top:17px;width:16px;height:757px;background:#c1c1c1"></div>
<svg style="left:1469px;top:6px" width="9" height="5" viewBox="0 0 9 5"><path d="M0 5H9L4.500 0Z" fill="#a3a3a3"/></svg>
<svg style="left:1469px;top:926px" width="9" height="5" viewBox="0 0 9 5"><path d="M0 0H9L4.500 5Z" fill="#505050"/></svg>
<svg style="left:0;top:930px" width="6" height="5" viewBox="0 0 6 5"><path d="M0 0Q1 4 6 5H0Z" fill="#222"/></svg>
</body></html>
